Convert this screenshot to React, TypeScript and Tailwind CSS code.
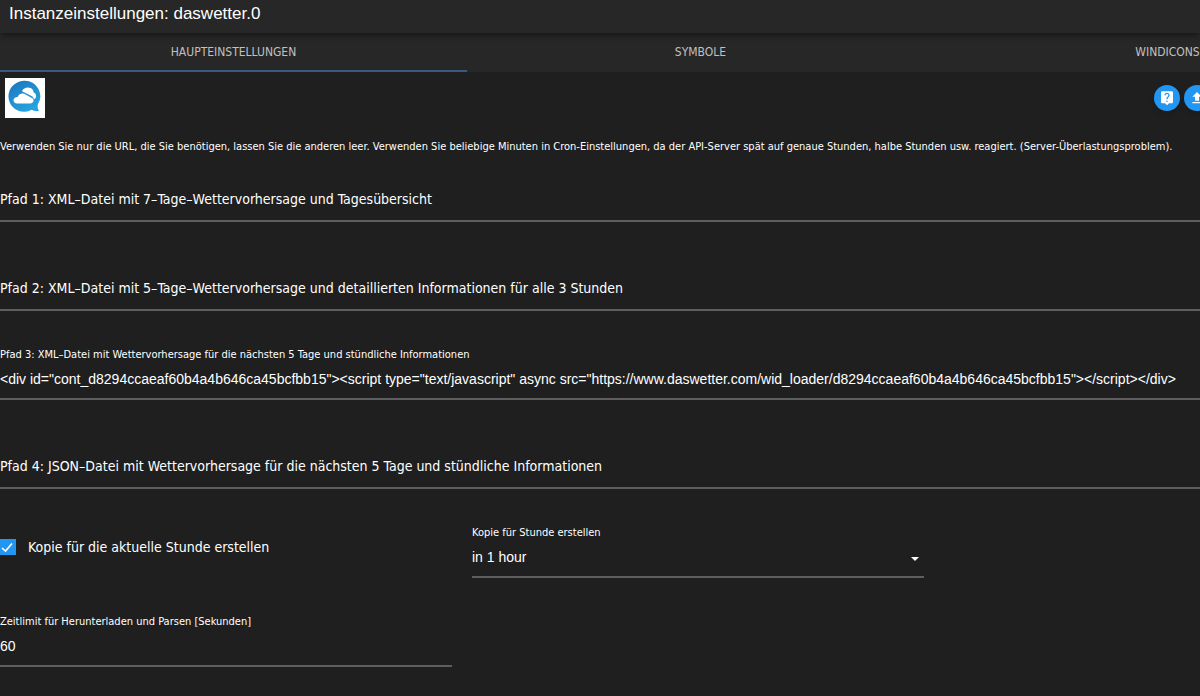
import { useState, type ReactNode } from "react";
import { MdLiveHelp, MdFileUpload } from "react-icons/md";

const TABS = ["Haupteinstellungen", "Symbole", "Windicons"];

const SCRIPT_SNIPPET =
  '<div id="cont_d8294ccaeaf60b4a4b646ca45bcfbb15"><script type="text/javascript" async src="https://www.daswetter.com/wid_loader/d8294ccaeaf60b4a4b646ca45bcfbb15"></script></div>';

function Logo() {
  return (
    <svg viewBox="0 0 40 40" className="size-10" role="img" aria-label="daswetter">
      <defs>
        <linearGradient id="bubble" x1="0" y1="0" x2="0.6" y2="1">
          <stop offset="0" stopColor="#1b75bc" />
          <stop offset="1" stopColor="#27a3df" />
        </linearGradient>
      </defs>
      <rect width="40" height="40" fill="#fff" />
      <path
        d="M19 2.800a15.500 15.500 0 1 0 7.600 29c2 1.100 4.400 1.600 7.400 1.200-1-1.400-1.600-3.600-1.200-6.400A15.500 15.500 0 0 0 19 2.800Z"
        fill="url(#bubble)"
      />
      <path
        d="M12 25.400h13c2.200 0 3.500-1.400 3.500-3 0-.8-.3-1.500-.8-2l-8-4.500c-3.300-1.200-6.500.6-7 3.200-2.600 0-4.200 1.300-4.200 3.200s1.500 3.100 3.500 3.100Z"
        fill="#fff"
      />
      <path
        d="M17 13.200c1.400-3 5.300-4.500 8.600-3.100 1.800.8 2.900 2.500 3.100 4.300 1.700.6 2.500 2 2.400 3.600 0 1.500-.9 2.800-2 3.300l-1.600-2.700-10.500-5.400Z"
        fill="#fff"
      />
    </svg>
  );
}

function RoundButton({ label, children }: { label: string; children: ReactNode }) {
  return (
    <button
      type="button"
      aria-label={label}
      className="flex size-[26px] shrink-0 items-center justify-center rounded-full bg-[#2196f3] text-base text-white shadow-md"
    >
      {children}
    </button>
  );
}

interface FieldProps {
  id: string;
  label: string;
  initial?: string;
}

// label sits on the line while the field is empty and moves up once it has a value
function TextField({ id, label, initial = "" }: FieldProps) {
  const [value, setValue] = useState(initial);
  const filled = value !== "";

  return (
    <div className="flex h-[89px] flex-col justify-end">
      {filled && (
        <label htmlFor={id} className="text-[11px] leading-4">
          {label}
        </label>
      )}
      <div className="grid items-center border-b-2 border-[#5e5e5e]">
        {!filled && (
          <label htmlFor={id} className="col-start-1 row-start-1 pb-2 text-sm">
            {label}
          </label>
        )}
        <input
          id={id}
          type="text"
          value={value}
          onChange={(e) => setValue(e.target.value)}
          className="col-start-1 row-start-1 h-[35px] w-full bg-transparent pb-1 font-['Liberation_Sans',sans-serif] text-sm outline-none"
        />
      </div>
    </div>
  );
}

export default function App() {
  const [active, setActive] = useState(0);
  const [copy, setCopy] = useState(true);

  return (
    <div className="min-h-screen overflow-hidden bg-[#1f1f1f] font-['DejaVu_Sans_Condensed','DejaVu_Sans',sans-serif] text-white">
      <header className="relative h-[33px] bg-[#272727] px-[9px] shadow-md shadow-black/30">
        <h1 className="font-['Liberation_Sans',sans-serif] text-[17px] leading-[27px]">
          Instanzeinstellungen: daswetter.0
        </h1>
      </header>

      <nav role="tablist" className="flex h-[39px] bg-[#272727]">
        {TABS.map((tab, i) => (
          <button
            key={tab}
            type="button"
            role="tab"
            aria-selected={i === active}
            onClick={() => setActive(i)}
            className={`w-[467px] shrink-0 border-b-2 text-xs uppercase text-[#c0c0c0] ${
              i === active ? "border-[#3a5880]" : "border-transparent"
            }`}
          >
            {tab}
          </button>
        ))}
      </nav>

      <main>
        <div className="flex items-center justify-between pt-[6px] pl-[5px]">
          <Logo />
          <div className="-mr-[10px] flex gap-1">
            <RoundButton label="Hilfe">
              <MdLiveHelp />
            </RoundButton>
            <RoundButton label="Hochladen">
              <MdFileUpload />
            </RoundButton>
          </div>
        </div>

        <p className="mt-[21px] h-4 text-[11px] leading-4 whitespace-nowrap">
          Verwenden Sie nur die URL, die Sie benötigen, lassen Sie die anderen leer. Verwenden Sie
          beliebige Minuten in Cron-Einstellungen, da der API-Server spät auf genaue Stunden, halbe
          Stunden usw. reagiert. (Server-Überlastungsproblem).
        </p>

        <form className="-mt-[22px]">
          <TextField id="pfad1" label="Pfad 1: XML–Datei mit 7–Tage–Wettervorhersage und Tagesübersicht" />
          <TextField
            id="pfad2"
            label="Pfad 2: XML–Datei mit 5–Tage–Wettervorhersage und detaillierten Informationen für alle 3 Stunden"
          />
          <TextField
            id="pfad3"
            label="Pfad 3: XML–Datei mit Wettervorhersage für die nächsten 5 Tage und stündliche Informationen"
            initial={SCRIPT_SNIPPET}
          />
          <TextField
            id="pfad4"
            label="Pfad 4: JSON–Datei mit Wettervorhersage für die nächsten 5 Tage und stündliche Informationen"
          />

          <div className="flex h-[89px] gap-5">
            <label className="flex w-[452px] items-center gap-3 pt-[26px] text-sm">
              <span className="grid size-4 place-items-center">
                <input
                  type="checkbox"
                  checked={copy}
                  onChange={(e) => setCopy(e.target.checked)}
                  className="col-start-1 row-start-1 size-4 appearance-none border border-[#2196f3] checked:bg-[#2196f3]"
                />
                {copy && (
                  <svg viewBox="0 0 16 16" className="pointer-events-none col-start-1 row-start-1 size-4">
                    <path d="M2 9l3.500 3L12 4.500" fill="none" stroke="#fff" strokeWidth="1.600" />
                  </svg>
                )}
              </span>
              Kopie für die aktuelle Stunde erstellen
            </label>

            <div className="flex w-[452px] flex-col justify-end">
              <label htmlFor="stunde" className="text-[11px] leading-4">
                Kopie für Stunde erstellen
              </label>
              <div className="grid items-center border-b-2 border-[#5e5e5e]">
                <select
                  id="stunde"
                  className="col-start-1 row-start-1 h-[35px] w-full appearance-none bg-transparent pb-1 font-['Liberation_Sans',sans-serif] text-sm outline-none"
                >
                  <option>in 1 hour</option>
                  <option>in 2 hours</option>
                  <option>in 3 hours</option>
                </select>
                <svg
                  viewBox="0 0 8 4"
                  className="pointer-events-none col-start-1 row-start-1 mr-[5px] h-1 w-2 justify-self-end"
                >
                  <path d="M0 0h8L4 4Z" fill="#fff" />
                </svg>
              </div>
            </div>
          </div>

          <div className="w-[452px] max-w-full">
            <TextField id="zeitlimit" label="Zeitlimit für Herunterladen und Parsen [Sekunden]" initial="60" />
          </div>
        </form>
      </main>
    </div>
  );
}
